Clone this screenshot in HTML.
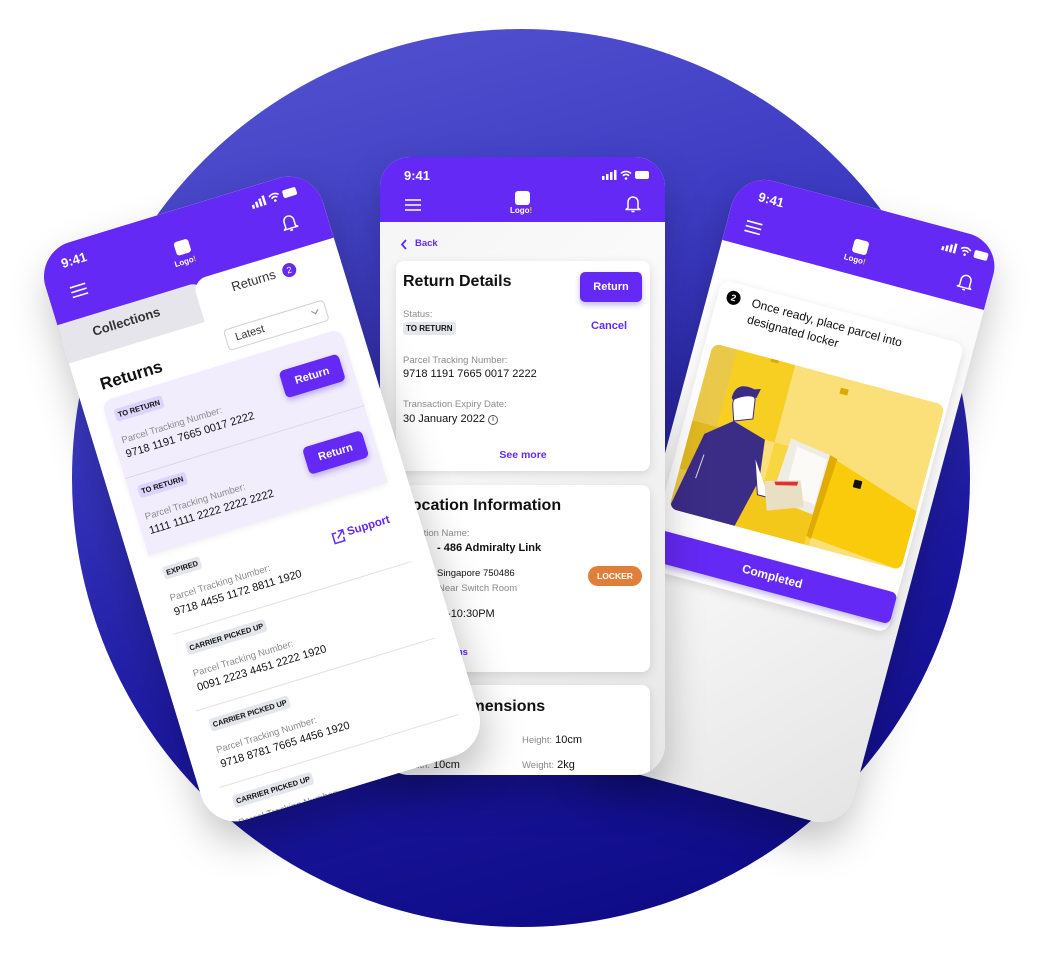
<!DOCTYPE html>
<html><head><meta charset="utf-8">
<style>
*{margin:0;padding:0;box-sizing:border-box}
body{width:1042px;height:958px;background:#fff;position:relative;overflow:hidden;font-family:"Liberation Sans",sans-serif;color:#111}
.circle{position:absolute;left:72px;top:29px;width:898px;height:898px;border-radius:50%;background:linear-gradient(165deg,#5656d2 0%,#3a38c0 35%,#1c18a0 65%,#0b0880 100%)}
.abs{position:absolute}
.phone{position:absolute;overflow:hidden;background:#fff;box-shadow:0 20px 40px rgba(0,0,0,.25)}
.hdr{position:absolute;left:0;top:0;width:100%;background:#6429f4}
.wt{color:#fff}
.b{font-weight:bold}
.card{position:absolute;background:#fff;border-radius:8px;box-shadow:0 3px 10px rgba(0,0,0,.12)}
.lbl{position:absolute;font-size:9.5px;color:#8a8a8a;white-space:nowrap}
.num{position:absolute;font-size:11px;color:#111;white-space:nowrap}
.chip{position:absolute;font-size:7.5px;font-weight:bold;background:#e3e6ec;border-radius:3px;padding:2px 3px;white-space:nowrap;color:#111}
.btn{position:absolute;background:#6429f4;color:#fff;font-weight:bold;font-size:11px;border-radius:5px;display:flex;align-items:center;justify-content:center;box-shadow:0 3px 6px rgba(60,20,180,.3)}
.purp{color:#6429f4;font-weight:bold;position:absolute;white-space:nowrap}
.sep{position:absolute;height:1px;background:#e2e2e6}
</style></head><body>
<div class="circle"></div>

<!-- RIGHT PHONE -->
<div class="phone" style="left:656.5px;top:197px;width:271px;height:608px;border-radius:34px;transform:rotate(15deg);background:linear-gradient(135deg,#fff 30%,#e4e4e4 100%)">
  <div class="hdr" style="height:70px"></div>
  <div class="abs wt b" style="left:24px;top:11px;font-size:13px">9:41</div>
  <svg class="abs" style="left:214px;top:12px" width="50" height="12" viewBox="0 0 50 12"><rect x="0" y="7" width="2.5" height="4" fill="#fff"/><rect x="4" y="5" width="2.5" height="6" fill="#fff"/><rect x="8" y="3" width="2.5" height="8" fill="#fff"/><rect x="12" y="1" width="2.5" height="10" fill="#fff"/><path d="M19 4.5a7 7 0 0 1 10 0M21 6.8a4 4 0 0 1 6 0" stroke="#fff" stroke-width="1.6" fill="none"/><circle cx="24" cy="9.5" r="1.3" fill="#fff"/><rect x="33" y="2" width="14" height="8" rx="2" fill="#fff"/></svg>
  <svg class="abs" style="left:18px;top:43px" width="18" height="14"><path d="M1 2h16M1 7h16M1 12h16" stroke="#fff" stroke-width="1.6"/></svg>
  <div class="abs" style="left:128px;top:34px;width:15px;height:14px;background:#fff;border-radius:3px"></div>
  <div class="abs wt b" style="left:122px;top:50px;font-size:8px">Logo<span style="color:#f5c000">!</span></div>
  <svg class="abs" style="left:238px;top:39px" width="16" height="18" viewBox="0 0 16 18"><path d="M3 13V7a5 5 0 0 1 10 0v6l2 1.5H1z" stroke="#fff" stroke-width="1.5" fill="none" stroke-linejoin="round"/><path d="M6.5 16.5h3" stroke="#fff" stroke-width="1.5"/></svg>
  <div class="card" style="left:10px;top:108px;width:251px;height:299px;border-radius:10px">
    <div class="abs" style="left:9px;top:8px;width:14px;height:14px;border-radius:50%;background:#000;color:#fff;font-size:9px;font-weight:bold;text-align:center;line-height:14px">2</div>
    <div class="abs" style="left:35px;top:7px;font-size:12px;line-height:17px;width:190px;color:#111">Once ready, place parcel into designated locker</div>
    <svg class="abs" style="left:8px;top:64px" width="240" height="171" viewBox="0 0 240 171">
      <defs><clipPath id="cl"><rect width="240" height="171" rx="8"/></clipPath></defs>
      <g clip-path="url(#cl)">
        <rect width="240" height="171" fill="#fbe07a"/>
        <rect x="0" y="0" width="70" height="171" fill="#e9c84a"/>
        <rect x="25" y="0" width="60" height="80" fill="#f7cf22"/>
        <rect x="0" y="80" width="40" height="50" fill="#e0b820"/>
        <rect x="85" y="80" width="60" height="91" fill="#f7d640"/>
        <rect x="40" y="120" width="100" height="51" fill="#f4c81a"/>
        <rect x="60" y="-3" width="8" height="6" fill="#d9a900"/>
        <rect x="135" y="10" width="8" height="6" fill="#d9a900"/>
        <polygon points="100,72 142,78 142,140 96,135" fill="#efece6"/>
        <polygon points="108,78 140,83 140,130 108,126" fill="#fbfaf6"/>
        <polygon points="145,80 240,110 240,171 140,162" fill="#f9cb0a"/>
        <polygon points="142,78 150,80 145,164 140,162" fill="#e0ac00"/>
        <rect x="172" y="95" width="8" height="8" rx="1" fill="#111"/>
        <polygon points="0,171 15,90 40,70 75,80 80,120 68,171" fill="#3b2c86"/>
        <path d="M40 70 l-5 -15 a12 12 0 0 1 20 -12 l3 20 z" fill="#fff" stroke="#3b2c86" stroke-width="1"/>
        <path d="M32 48 q0 -18 20 -14 l6 -2 l-2 10 q-10 -2 -22 8z" fill="#3b2c86"/>
        <path d="M70 100 l12 35 l12 0" stroke="#3b2c86" stroke-width="1" fill="#fff"/>
        <polygon points="85,120 120,110 130,135 95,148" fill="#e9dfc2"/>
        <polygon points="95,118 118,112 118,116 97,121" fill="#e23030"/>
        <path d="M20 110 l-2 25" stroke="#ddd" stroke-width="1"/>
      </g>
    </svg>
  </div>
  <div class="btn" style="left:10px;top:366px;width:251px;height:32px;font-size:12px;border-radius:6px">Completed</div>
</div>

<!-- MIDDLE PHONE -->
<div class="phone" style="left:380px;top:157px;width:285px;height:618px;border-radius:30px;background:linear-gradient(135deg,#f4f4f4 0%,#fafafa 40%,#e6e6e6 100%)">
  <div class="hdr" style="height:65px"></div>
  <div class="abs wt b" style="left:24px;top:11px;font-size:13px">9:41</div>
  <svg class="abs" style="left:222px;top:12px" width="50" height="12" viewBox="0 0 50 12"><rect x="0" y="7" width="2.5" height="4" fill="#fff"/><rect x="4" y="5" width="2.5" height="6" fill="#fff"/><rect x="8" y="3" width="2.5" height="8" fill="#fff"/><rect x="12" y="1" width="2.5" height="10" fill="#fff"/><path d="M19 4.5a7 7 0 0 1 10 0M21 6.8a4 4 0 0 1 6 0" stroke="#fff" stroke-width="1.6" fill="none"/><circle cx="24" cy="9.5" r="1.3" fill="#fff"/><rect x="33" y="2" width="14" height="8" rx="2" fill="#fff"/></svg>
  <svg class="abs" style="left:24px;top:41px" width="18" height="14"><path d="M1 2h16M1 7h16M1 12h16" stroke="#fff" stroke-width="1.6"/></svg>
  <div class="abs" style="left:135px;top:34px;width:15px;height:14px;background:#fff;border-radius:3px"></div>
  <div class="abs wt b" style="left:130px;top:49px;font-size:8px">Logo<span style="color:#f5c000">!</span></div>
  <svg class="abs" style="left:245px;top:38px" width="16" height="18" viewBox="0 0 16 18"><path d="M3 13V7a5 5 0 0 1 10 0v6l2 1.5H1z" stroke="#fff" stroke-width="1.5" fill="none" stroke-linejoin="round"/><path d="M6.5 16.5h3" stroke="#fff" stroke-width="1.5"/></svg>
  <svg class="abs" style="left:20px;top:82px" width="8" height="11"><path d="M6 1L2 5.5 6 10" stroke="#6429f4" stroke-width="1.8" fill="none"/></svg>
  <div class="purp" style="left:35px;top:81px;font-size:9.5px">Back</div>

  <div class="card" style="left:16px;top:104px;width:254px;height:210px">
    <div class="abs b" style="left:7px;top:12px;font-size:16px">Return Details</div>
    <div class="btn" style="left:184px;top:11px;width:62px;height:30px">Return</div>
    <div class="lbl" style="left:7px;top:48px">Status:</div>
    <div class="chip" style="left:7px;top:61px;font-size:8px">TO RETURN</div>
    <div class="purp" style="left:195px;top:59px;font-size:11px">Cancel</div>
    <div class="lbl" style="left:7px;top:94px">Parcel Tracking Number:</div>
    <div class="num" style="left:7px;top:107px">9718 1191 7665 0017 2222</div>
    <div class="lbl" style="left:7px;top:138px">Transaction Expiry Date:</div>
    <div class="num" style="left:7px;top:152px">30 January 2022 <span style="display:inline-block;width:10px;height:10px;border:1px solid #555;border-radius:50%;font-size:7px;text-align:center;line-height:8px;vertical-align:1px">i</span></div>
    <div class="purp" style="left:0;width:254px;text-align:center;top:188px;font-size:10.5px">See more</div>
  </div>

  <div class="card" style="left:16px;top:328px;width:254px;height:187px">
    <div class="abs b" style="left:6px;top:12px;font-size:16px">Location Information</div>
    <div class="lbl" style="left:7px;top:43px">Location Name:</div>
    <div class="abs b" style="left:41px;top:57px;font-size:11px;white-space:nowrap">- 486 Admiralty Link</div>
    <div class="abs" style="left:41px;top:83px;font-size:9.5px;white-space:nowrap">Singapore 750486</div>
    <div class="lbl" style="left:42px;top:98px">Near Switch Room</div>
    <div class="abs" style="left:192px;top:81px;width:54px;height:20px;border-radius:10px;background:#e07f3a;color:#fff;font-size:8.5px;font-weight:bold;text-align:center;line-height:20px">LOCKER</div>
    <div class="abs" style="left:7px;top:123px;font-size:11px;white-space:nowrap">10:30AM-10:30PM</div>
    <div class="purp" style="left:7px;top:162px;font-size:9.5px">Get Directions</div>
  </div>

  <div class="card" style="left:16px;top:528px;width:254px;height:140px">
    <div class="abs b" style="left:6px;top:13px;font-size:16px">Parcel Dimensions</div>
    <div class="abs" style="left:7px;top:49px;font-size:11px"><span style="color:#888;font-size:9.5px">Length:</span> 10cm</div>
    <div class="abs" style="left:126px;top:49px;font-size:11px"><span style="color:#888;font-size:9.5px">Height:</span> 10cm</div>
    <div class="abs" style="left:7px;top:74px;font-size:11px"><span style="color:#888;font-size:9.5px">Width:</span> 10cm</div>
    <div class="abs" style="left:126px;top:74px;font-size:11px"><span style="color:#888;font-size:9.5px">Weight:</span> 2kg</div>
  </div>
</div>

<!-- LEFT PHONE -->
<div class="phone" style="left:117px;top:197px;width:290px;height:604px;border-radius:36px;transform:rotate(-17deg)">
  <div class="hdr" style="height:90px"></div>
  <div class="abs wt b" style="left:22px;top:11px;font-size:13px">9:41</div>
  <svg class="abs" style="left:221px;top:11px" width="50" height="12" viewBox="0 0 50 12"><rect x="0" y="7" width="2.5" height="4" fill="#fff"/><rect x="4" y="5" width="2.5" height="6" fill="#fff"/><rect x="8" y="3" width="2.5" height="8" fill="#fff"/><rect x="12" y="1" width="2.5" height="10" fill="#fff"/><path d="M19 4.5a7 7 0 0 1 10 0M21 6.8a4 4 0 0 1 6 0" stroke="#fff" stroke-width="1.6" fill="none"/><circle cx="24" cy="9.5" r="1.3" fill="#fff"/><rect x="33" y="2" width="14" height="8" rx="2" fill="#fff"/></svg>
  <svg class="abs" style="left:22px;top:42px" width="18" height="14"><path d="M1 2h16M1 7h16M1 12h16" stroke="#fff" stroke-width="1.6"/></svg>
  <div class="abs" style="left:135px;top:31px;width:15px;height:14px;background:#fff;border-radius:3px"></div>
  <div class="abs wt b" style="left:130px;top:48px;font-size:8px">Logo<span style="color:#f5c000">!</span></div>
  <svg class="abs" style="left:244px;top:37px" width="16" height="18" viewBox="0 0 16 18"><path d="M3 13V7a5 5 0 0 1 10 0v6l2 1.5H1z" stroke="#fff" stroke-width="1.5" fill="none" stroke-linejoin="round"/><path d="M6.5 16.5h3" stroke="#fff" stroke-width="1.5"/></svg>
  <div class="abs" style="left:0;top:76px;width:152px;height:45px;background:#e6e5ec;border-radius:0 14px 0 0"></div>
  <div class="abs" style="left:142px;top:73px;width:148px;height:48px;background:#fff;border-radius:14px 0 0 0"></div>
  <div class="abs" style="left:0;top:116px;width:290px;height:490px;background:#fff"></div>
  <div class="abs" style="left:32px;top:85px;font-size:13px;font-weight:bold;color:#333">Collections</div>
  <div class="abs" style="left:178px;top:83px;font-size:13px;color:#333">Returns</div>
  <div class="abs" style="left:231px;top:84px;width:14px;height:14px;border-radius:50%;background:#6429f4;color:#fff;font-size:9px;text-align:center;line-height:14px">2</div>
  <div class="abs" style="left:157px;top:129px;width:105px;height:22px;border:1px solid #cfcfd6;border-radius:4px;background:#fff"></div>
  <div class="abs" style="left:167px;top:134px;font-size:11px;color:#333">Latest</div>
  <svg class="abs" style="left:246px;top:136px" width="9" height="6"><path d="M1 1l3.5 3.5L8 1" stroke="#999" stroke-width="1.2" fill="none"/></svg>
  <div class="abs b" style="left:24px;top:136px;font-size:17px">Returns</div>

  <div class="abs" style="left:20px;top:162px;width:250px;height:161px;background:#f1edfd;border-radius:10px 10px 0 0;box-shadow:0 2px 6px rgba(0,0,0,.06)"></div>

  <div class="chip" style="left:29px;top:173px;background:#ddd4fb">TO RETURN</div>
  <div class="btn" style="left:198px;top:185px;width:62px;height:28px">Return</div>
  <div class="lbl" style="left:28px;top:200px">Parcel Tracking Number:</div>
  <div class="num" style="left:28px;top:214px">9718 1191 7665 0017 2222</div>
  <div class="sep" style="left:20px;top:242px;width:250px;background:#ddd6f0"></div>
  <div class="chip" style="left:29px;top:253px;background:#ddd4fb">TO RETURN</div>
  <div class="btn" style="left:198px;top:265px;width:62px;height:28px">Return</div>
  <div class="lbl" style="left:28px;top:280px">Parcel Tracking Number:</div>
  <div class="num" style="left:28px;top:294px">1111 1111 2222 2222 2222</div>
  <svg class="abs" style="left:200px;top:354px" width="14" height="14" viewBox="0 0 14 14"><path d="M6 2H2v10h10V8M8 1h5v5M13 1L6 8" stroke="#6429f4" stroke-width="1.5" fill="none"/></svg>
  <div class="purp" style="left:217px;top:353px;font-size:11.5px">Support</div>
  <div class="chip" style="left:29px;top:338px">EXPIRED</div>
  <div class="lbl" style="left:28px;top:365px">Parcel Tracking Number:</div>
  <div class="num" style="left:28px;top:379px">9718 4455 1172 8811 1920</div>
  <div class="sep" style="left:20px;top:405px;width:250px"></div>
  <div class="chip" style="left:29px;top:417px">CARRIER PICKED UP</div>
  <div class="lbl" style="left:28px;top:444px">Parcel Tracking Number:</div>
  <div class="num" style="left:28px;top:458px">0091 2223 4451 2222 1920</div>
  <div class="sep" style="left:20px;top:485px;width:250px"></div>
  <div class="chip" style="left:29px;top:497px">CARRIER PICKED UP</div>
  <div class="lbl" style="left:28px;top:524px">Parcel Tracking Number:</div>
  <div class="num" style="left:28px;top:538px">9718 8781 7665 4456 1920</div>
  <div class="sep" style="left:20px;top:565px;width:250px"></div>
  <div class="chip" style="left:29px;top:577px">CARRIER PICKED UP</div>
  <div class="lbl" style="left:28px;top:600px">Parcel Tracking Number:</div>
</div>
</body></html>
